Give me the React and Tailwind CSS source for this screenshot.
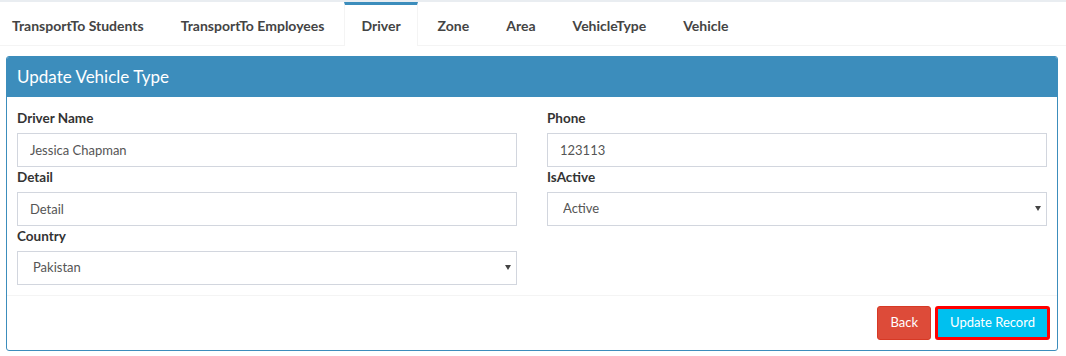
import { useState } from "react"

const tabs = [
  "TransportTo Students",
  "TransportTo Employees",
  "Driver",
  "Zone",
  "Area",
  "VehicleType",
  "Vehicle",
]

function Field({ label, children }) {
  return (
    <div className="flex flex-col">
      <label className="text-[13.5px] leading-5 font-bold text-[#333] mb-[5px]">{label}</label>
      {children}
    </div>
  )
}

function TextInput({ value }) {
  return (
    <input
      type="text"
      defaultValue={value}
      className="h-[34px] w-full border border-[#d2d6de] px-3 text-[13px] text-[#555] bg-white focus:outline-none focus:border-[#3c8dbc]"
    />
  )
}

function Select({ value, options }) {
  return (
    <div className="relative h-[34px] w-full border border-[#d2d6de] bg-white">
      <select
        defaultValue={value}
        className="h-full w-full appearance-none bg-transparent pl-[15px] pr-8 text-[13px] text-[#555] focus:outline-none"
      >
        {options.map((o) => (
          <option key={o}>{o}</option>
        ))}
      </select>
      <svg
        className="pointer-events-none absolute right-[5px] top-[13px]"
        width="6"
        height="5"
        viewBox="0 0 6 5"
      >
        <path d="M0 0 H6 L3 5 Z" fill="#444" />
      </svg>
    </div>
  )
}

export default function App() {
  const [active, setActive] = useState("Driver")

  return (
    <div className="min-h-[356px] bg-white font-['Lato',sans-serif]">
      {/* Tabs */}
      <div className="border-t-2 border-[#e9edf1]">
        <div className="flex gap-[3px] -ml-[5px] border-b border-[#f4f4f4] h-[44px]">
          {tabs.map((t) => (
            <button
              key={t}
              onClick={() => setActive(t)}
              className={`px-4 text-[14px] leading-5 font-bold text-[#444] border-x h-[44px] flex items-start ${
                active === t
                  ? "border-t-[3px] border-t-[#3c8dbc] border-x-[#f4f4f4] bg-white pt-[11px]"
                  : "border-x-transparent pt-[14px]"
              }`}
            >
              {t}
            </button>
          ))}
        </div>
      </div>

      {/* Box */}
      <div className="mt-[10px] ml-[6px] mr-[8px] border border-[#3c8dbc] rounded-[3px] overflow-hidden">
        <div className="bg-[#3c8dbc] h-[40px] flex items-center px-[10px]">
          <h3 className="text-white text-[17px]">Update Vehicle Type</h3>
        </div>
        <div className="px-[10px] pt-[11px] pb-[10px] grid grid-cols-2 gap-x-[30px]">
          <div className="flex flex-col">
            <Field label="Driver Name">
              <TextInput value="Jessica Chapman" />
            </Field>
            <Field label="Detail">
              <TextInput value="Detail" />
            </Field>
            <Field label="Country">
              <Select value="Pakistan" options={["Pakistan", "India", "China"]} />
            </Field>
          </div>
          <div className="flex flex-col">
            <Field label="Phone">
              <TextInput value="123113" />
            </Field>
            <Field label="IsActive">
              <Select value="Active" options={["Active", "Inactive"]} />
            </Field>
          </div>
        </div>
        <div className="border-t border-[#f4f4f4] pt-[10px] pb-[10px] pl-[10px] pr-[7px] flex justify-end gap-[4px]">
          <button className="h-[34px] px-3 rounded-[3px] bg-[#dd4b39] text-white text-[13px] border border-[#d73925]">
            Back
          </button>
          <button className="h-[34px] px-3 rounded-[3px] bg-[#00c0ef] text-white text-[13px] border-[3px] border-[#ff0000]">
            Update Record
          </button>
        </div>
      </div>
    </div>
  )
}
